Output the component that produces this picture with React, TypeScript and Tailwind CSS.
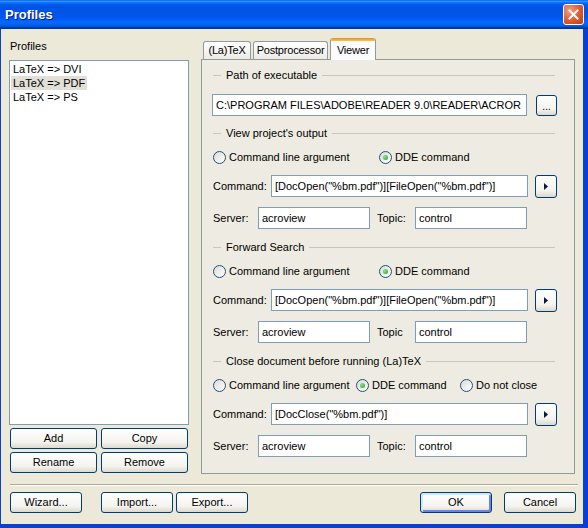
import React from 'react'

const btn =
  'flex items-center justify-center rounded-[3px] border border-[#003C74] bg-[linear-gradient(to_bottom,#FFFFFF,#F4F3EE_70%,#DCD8CB)] text-black'

function XpButton({ children, className = '' }: { children?: React.ReactNode; className?: string }) {
  return <div className={`${btn} ${className}`}>{children}</div>
}

function Radio({ checked = false }: { checked?: boolean }) {
  return (
    <div className="w-[13px] h-[13px] rounded-full border border-[#1C5180] bg-[linear-gradient(135deg,#DCDBD3,#FFFFFF)] flex items-center justify-center shrink-0">
      {checked && <div className="w-[5px] h-[5px] rounded-full bg-[radial-gradient(circle_at_35%_35%,#8DE38D,#21A121)]" />}
    </div>
  )
}

function Field({ children, className = '' }: { children?: React.ReactNode; className?: string }) {
  return (
    <div className={`h-[22px] bg-white border border-[#7F9DB9] pl-[3px] flex items-center overflow-hidden whitespace-nowrap ${className}`}>
      {children}
    </div>
  )
}

function GroupHeader({ title, className = '' }: { title: string; className?: string }) {
  return (
    <div className={`flex items-center h-[14px] ${className}`}>
      <div className="ml-[1px] w-[8px] h-px bg-[#CAC7B6]" />
      <span className="px-[5px]">{title}</span>
      <div className="flex-1 h-px bg-[#CAC7B6] mr-[2px]" />
    </div>
  )
}

function Arrow() {
  return (
    <XpButton className="ml-[7px] w-[22px] h-[23px]">
      <svg width="4" height="7" viewBox="0 0 4 7">
        <path d="M0 0 L4 3.5 L0 7 Z" fill="#0B1A3C" />
      </svg>
    </XpButton>
  )
}

function DdeGroup({
  title,
  command,
  topic,
  radios,
}: {
  title: string
  command: string
  topic: string
  radios: { label: string; checked?: boolean; w?: string }[]
}) {
  return (
    <>
      <GroupHeader title={title} className="mt-[11px]" />
      <div className="mt-[10px] h-[14px] flex items-center ml-[1px]">
        {radios.map((r) => (
          <div key={r.label} className={`flex items-center ${r.w ?? ''}`}>
            <Radio checked={r.checked} />
            <span className="ml-[3px]">{r.label}</span>
          </div>
        ))}
      </div>
      <div className="mt-[11px] h-[23px] flex items-start">
        <span className="ml-[1px] w-[58px] h-[22px] flex items-center">Command:</span>
        <Field className="w-[257px]">{command}</Field>
        <Arrow />
      </div>
      <div className="mt-[9px] h-[22px] flex items-center">
        <span className="ml-[1px] w-[45px]">Server:</span>
        <Field className="w-[112px]">acroview</Field>
        <span className="ml-[7px] w-[38px]">{topic}</span>
        <Field className="w-[112px]">control</Field>
      </div>
    </>
  )
}

export default function App() {
  return (
    <div className="w-[588px] h-[528px] bg-[#0A3FD6] flex flex-col font-['Liberation_Sans',Arial,sans-serif] text-[11px] text-black overflow-hidden">
      {/* title bar */}
      <div className="h-[29px] shrink-0 flex items-center justify-between bg-[linear-gradient(to_bottom,#0058EE_0%,#3593FF_4%,#288EFF_6%,#127DFF_8%,#036FFC_10%,#0262EE_14%,#0057E5_20%,#0054E3_24%,#0055EB_56%,#005BF5_66%,#026AFE_76%,#0062EF_86%,#0052D6_92%,#0040AB_94%,#003092_100%)]">
        <span className="ml-[5px] text-white font-bold text-[13px] [text-shadow:1px_1px_0_#0A1883]">Profiles</span>
        <div className="mr-[4px] w-[21px] h-[21px] rounded-[3px] border border-white bg-[radial-gradient(circle_at_30%_30%,#F0A080,#E0582F_55%,#C23A1A)] flex items-center justify-center">
          <svg width="11" height="11" viewBox="0 0 11 11">
            <path d="M1.5 1.5 L9.5 9.5 M9.5 1.5 L1.5 9.5" stroke="white" strokeWidth="2" strokeLinecap="square" />
          </svg>
        </div>
      </div>

      {/* client */}
      <div className="flex-1 ml-[1px] mr-[5px] mb-[4px] bg-[#ECE9D8] flex flex-col">
        <div className="flex pt-[9px] pl-[8px]">
          {/* left column */}
          <div className="w-[180px] flex flex-col">
            <div className="mt-[1px] h-[14px] pl-[1px] flex items-center">Profiles</div>
            <div className="mt-[7px] h-[365px] bg-white border border-[#7F9DB9] pt-[1px]">
              <div className="h-[14px] flex items-center"><span className="ml-[1px] px-[2px]">LaTeX =&gt; DVI</span></div>
              <div className="h-[14px] flex items-center"><span className="ml-[1px] px-[2px] h-[14px] flex items-center bg-[#E1DFD6]">LaTeX =&gt; PDF</span></div>
              <div className="h-[14px] flex items-center"><span className="ml-[1px] px-[2px]">LaTeX =&gt; PS</span></div>
            </div>
            <div className="mt-[3px] pl-[1px] grid grid-cols-[87px_87px] gap-x-[4px] gap-y-[3px]">
              <XpButton className="h-[21px]">Add</XpButton>
              <XpButton className="h-[21px]">Copy</XpButton>
              <XpButton className="h-[21px]">Rename</XpButton>
              <XpButton className="h-[21px]">Remove</XpButton>
            </div>
          </div>

          {/* right column */}
          <div className="ml-[12px] w-[374px] flex flex-col">
            <div className="h-[21px] flex items-end pl-[2px] gap-[2px] tracking-[-0.2px]">
              <div className="h-[18px] w-[48px] flex items-center justify-center border border-b-0 border-[#919B9C] rounded-t-[3px] bg-[linear-gradient(to_bottom,#FFFFFF,#ECEBE6)]">(La)TeX</div>
              <div className="h-[18px] w-[75px] flex items-center justify-center border border-b-0 border-[#919B9C] rounded-t-[3px] bg-[linear-gradient(to_bottom,#FFFFFF,#ECEBE6)] whitespace-nowrap overflow-hidden">Postprocessor</div>
              <div className="relative z-10 mb-[-1px] h-[22px] w-[46px] flex flex-col border-x border-[#919B9C] rounded-t-[3px] bg-[#FCFCFE] overflow-hidden">
                <div className="h-[3px] bg-[linear-gradient(to_bottom,#E68B2C,#FFC83C)]" />
                <div className="flex-1 flex items-start justify-center pt-[1px]">Viewer</div>
              </div>
            </div>
            <div className="h-[415px] border border-[#919B9C] bg-[#EEECE2] pl-[10px] pr-[17px] pt-[8px] flex flex-col">
              <GroupHeader title="Path of executable" />
              <div className="mt-[12px] mb-[-1px] h-[22px] flex items-center">
                <Field className="w-[316px]">C:\PROGRAM FILES\ADOBE\READER 9.0\READER\ACROR</Field>
                <XpButton className="ml-[9px] w-[21px] h-[21px] items-end pb-[3px] leading-none text-[10px]">...</XpButton>
              </div>
              <DdeGroup
                title="View project's output"
                command={'[DocOpen("%bm.pdf")][FileOpen("%bm.pdf")]'}
                topic="Topic:"
                radios={[
                  { label: 'Command line argument', w: 'w-[166px]' },
                  { label: 'DDE command', checked: true },
                ]}
              />
              <DdeGroup
                title="Forward Search"
                command={'[DocOpen("%bm.pdf")][FileOpen("%bm.pdf")]'}
                topic="Topic"
                radios={[
                  { label: 'Command line argument', w: 'w-[166px]' },
                  { label: 'DDE command', checked: true },
                ]}
              />
              <DdeGroup
                title="Close document before running (La)TeX"
                command={'[DocClose("%bm.pdf")]'}
                topic="Topic:"
                radios={[
                  { label: 'Command line argument', w: 'w-[143px]' },
                  { label: 'DDE command', checked: true, w: 'w-[104px]' },
                  { label: 'Do not close' },
                ]}
              />
            </div>
          </div>
        </div>

        {/* separator */}
        <div className="mt-[10px] ml-[9px] mr-[5px] h-[2px] border-t border-[#ACA899] bg-white" />

        {/* bottom buttons */}
        <div className="mt-[6px] flex pl-[9px] pr-[7px]">
          <XpButton className="w-[72px] h-[21px]">Wizard...</XpButton>
          <XpButton className="ml-[19px] w-[72px] h-[21px]">Import...</XpButton>
          <XpButton className="ml-[3px] w-[72px] h-[21px]">Export...</XpButton>
          <div className="flex-1" />
          <XpButton className="w-[72px] h-[21px] shadow-[inset_1px_1px_0_1px_#CEE7FF,inset_-1px_-1px_0_1px_#6982EE]">OK</XpButton>
          <XpButton className="ml-[12px] w-[72px] h-[21px]">Cancel</XpButton>
        </div>
      </div>
    </div>
  )
}
